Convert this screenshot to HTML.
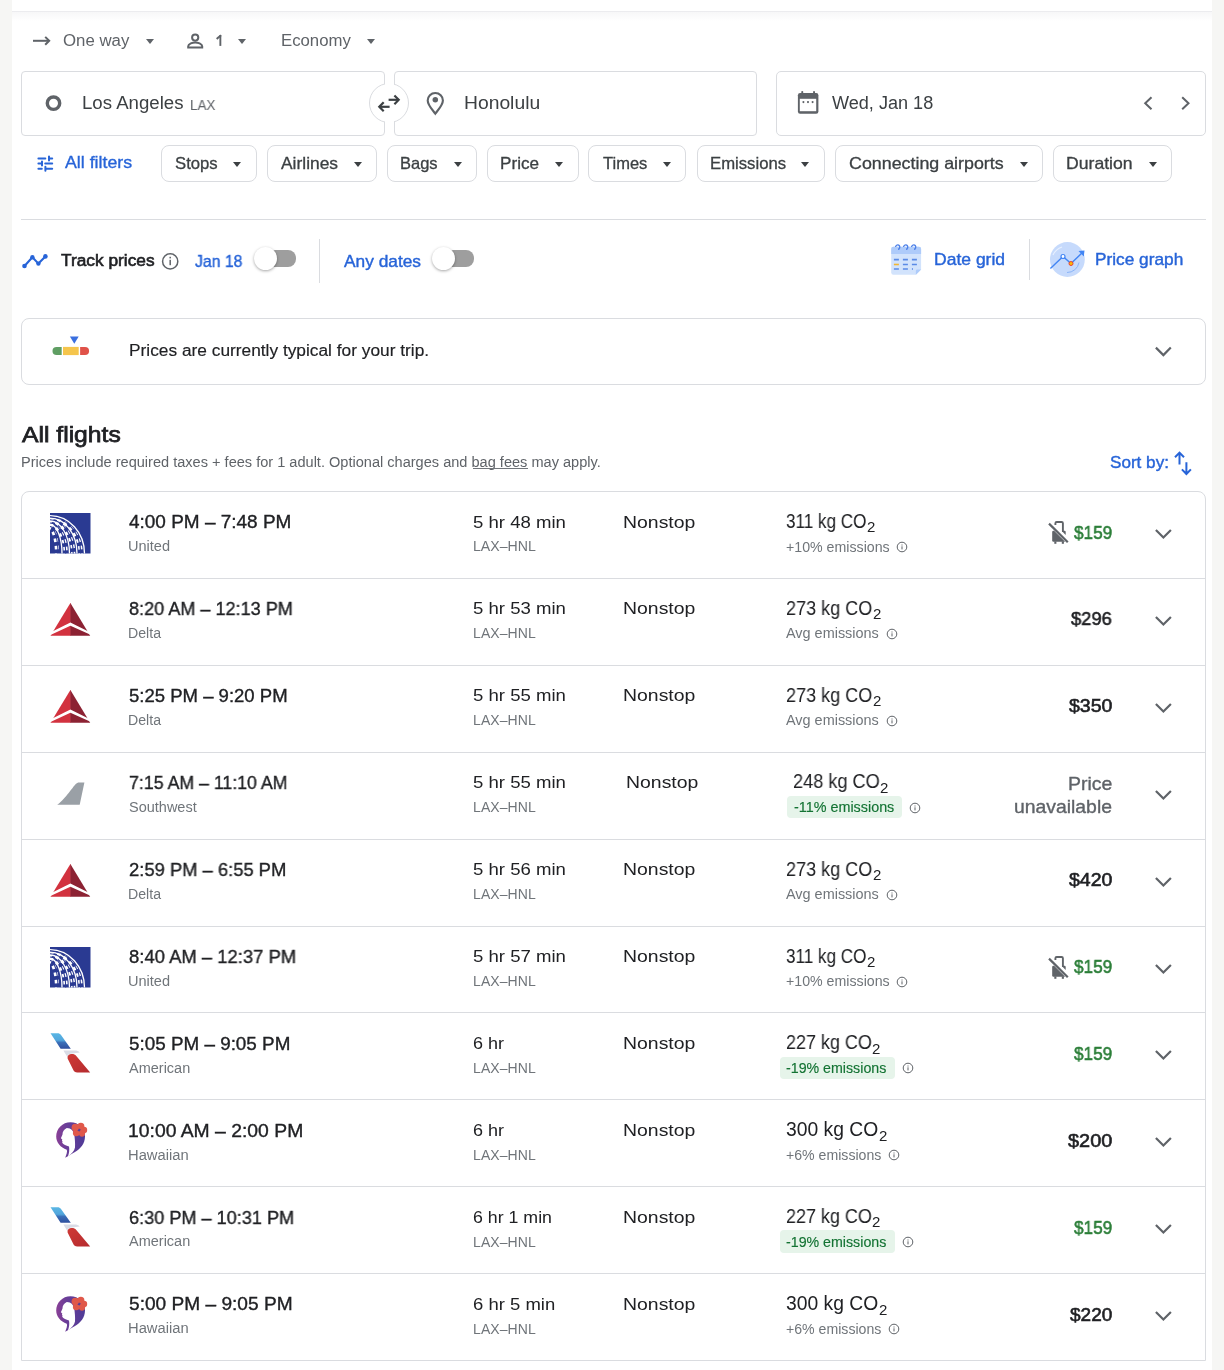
<!DOCTYPE html>
<html><head><meta charset="utf-8"><title>Flights</title>
<style>
html,body{margin:0;padding:0;}
body{width:1224px;height:1370px;overflow:hidden;background:#f6f6f4;font-family:"Liberation Sans",sans-serif;}
#pg{position:absolute;left:0;top:0;width:1224px;height:1370px;overflow:hidden;}
.white{position:absolute;left:12px;top:0;width:1200px;height:1370px;background:#fff;}
.t{position:absolute;white-space:nowrap;z-index:2;will-change:transform;}
.a{position:absolute;}
.box{position:absolute;box-sizing:border-box;border:1px solid #dadce0;background:#fff;}
.chip{position:absolute;box-sizing:border-box;border:1px solid #dadce0;border-radius:8px;height:37px;top:145px;background:#fff;}
.tri{position:absolute;width:0;height:0;border-left:4.5px solid transparent;border-right:4.5px solid transparent;border-top:5px solid #3c4043;}
.hr{position:absolute;height:1px;background:#dadce0;}
.vr{position:absolute;width:1px;background:#dadce0;}
svg{position:absolute;overflow:visible;}
.tog-track{position:absolute;height:16px;border-radius:8px;background:#9e9e9e;opacity:1;}
.tog-knob{position:absolute;width:23px;height:23px;border-radius:50%;background:#fff;box-shadow:0 1px 3px rgba(0,0,0,.35);}
.badge{position:absolute;background:#e6f4ea;border-radius:4px;height:23px;}
</style></head>
<body><div id="pg"><div class="white"></div>
<div class="a" style="left:12px;top:11px;width:1200px;height:1px;background:#ececef"></div>
<div class="a" style="left:12px;top:12px;width:1200px;height:9px;background:linear-gradient(#f7f7f8,#fff)"></div>
<svg style="left:0;top:0" width="1224" height="60"><g fill="none" stroke="#5f6368" stroke-width="2"><path d="M33 40.8H49"/><path d="M45.2 36.9L49.2 40.8L45.2 44.8"/></g><g fill="none" stroke="#5f6368" stroke-width="2"><circle cx="195.2" cy="37.6" r="3.1"/><path d="M188.2 47.5V46.2c0-2.4 4.6-3.8 7-3.8s7 1.4 7 3.8V47.5z"/></g></svg>
<div class="tri" style="left:146px;top:38.5px;border-top-color:#5f6368"></div>
<svg style="left:0;top:0" width="300" height="60"><path d="M217.4 38.3L220.3 35.9" stroke="#5f6368" stroke-width="1.9" stroke-linecap="square"/><path d="M220.35 35V45.9" stroke="#5f6368" stroke-width="1.9"/></svg>
<div class="tri" style="left:238px;top:38.5px;border-top-color:#5f6368"></div>
<div class="tri" style="left:367px;top:38.5px;border-top-color:#5f6368"></div>
<div class="box" style="left:21px;top:71px;width:363.5px;height:64.5px;border-radius:4px"></div>
<div class="box" style="left:394px;top:71px;width:363px;height:64.5px;border-radius:4px"></div>
<div class="box" style="left:776px;top:71px;width:430px;height:64.5px;border-radius:5px"></div>
<div class="a" style="left:368.6px;top:82.6px;width:40.8px;height:40.8px;box-sizing:border-box;border:1px solid #dadce0;border-radius:50%;background:#fff;z-index:1"></div>
<div class="a" style="left:384.5px;top:70px;width:9px;height:67px;background:#fff;z-index:1"></div>
<svg style="left:0;top:0;z-index:3" width="1224" height="140"><circle cx="53.5" cy="103.2" r="6.2" fill="none" stroke="#5f6368" stroke-width="3.4"/><g fill="none" stroke="#3c4043" stroke-width="2.2"><path d="M388.6 99.8H398.5"/><path d="M394.4 95.4L398.7 99.8L394.4 104.2"/><path d="M389.6 106.8H379.5"/><path d="M383.7 102.3L379.3 106.8L383.7 111.2"/></g><path d="M435.3 93c-4.3 0-7.6 3.3-7.6 7.4c0 4.6 5 9.7 7.6 13.3c2.6-3.6 7.6-8.7 7.6-13.3c0-4.1-3.3-7.4-7.6-7.4z" fill="none" stroke="#5f6368" stroke-width="2.1"/><circle cx="435.3" cy="99.8" r="2.75" fill="#5f6368"/><rect x="797.9" y="93.1" width="20.5" height="20.6" rx="2.2" fill="#5f6368"/><rect x="799.8" y="98.8" width="16.4" height="12.4" fill="#fff"/><rect x="801.3" y="90.9" width="1.9" height="3.5" rx="0.9" fill="#5f6368"/><rect x="813.1" y="90.9" width="1.9" height="3.5" rx="0.9" fill="#5f6368"/><circle cx="803.4" cy="102.1" r="1.05" fill="#5f6368"/><circle cx="808" cy="102.1" r="1.05" fill="#5f6368"/><circle cx="812.6" cy="102.1" r="1.05" fill="#5f6368"/><g fill="none" stroke="#5f6368" stroke-width="2"><path d="M1151.5 97.2L1145.2 103.2L1151.5 109.2"/><path d="M1182.2 97.2L1188.5 103.2L1182.2 109.2"/></g></svg>
<svg style="left:0;top:0" width="200" height="200"><g stroke="#2764d8" stroke-width="2" fill="none" stroke-linecap="round"><path d="M38.4 158.4H45.3M49 158.4H52.2M49 156.4V160.4"/><path d="M38.4 163.6H41.6M45.2 163.6H52.2M42 161.6V165.6"/><path d="M38.4 168.7H41.8M45.6 168.7H52.2M45.4 166.8V170.8"/></g></svg>
<div class="chip" style="left:161px;width:95.5px"></div>
<div class="tri" style="left:233.0px;top:161.5px;z-index:3"></div>
<div class="chip" style="left:266.7px;width:110.3px"></div>
<div class="tri" style="left:353.5px;top:161.5px;z-index:3"></div>
<div class="chip" style="left:387.3px;width:90.0px"></div>
<div class="tri" style="left:453.8px;top:161.5px;z-index:3"></div>
<div class="chip" style="left:487.2px;width:91.5px"></div>
<div class="tri" style="left:555.2px;top:161.5px;z-index:3"></div>
<div class="chip" style="left:588.4px;width:98.0px"></div>
<div class="tri" style="left:662.9px;top:161.5px;z-index:3"></div>
<div class="chip" style="left:696.5px;width:128.3px"></div>
<div class="tri" style="left:801.3px;top:161.5px;z-index:3"></div>
<div class="chip" style="left:835.4px;width:207.6px"></div>
<div class="tri" style="left:1019.5px;top:161.5px;z-index:3"></div>
<div class="chip" style="left:1053.2px;width:119.2px"></div>
<div class="tri" style="left:1148.9px;top:161.5px;z-index:3"></div>
<div class="hr" style="left:21px;top:219px;width:1185px"></div>
<svg style="left:0;top:0" width="1224" height="300"><g fill="#2764d8"><circle cx="24.5" cy="266" r="2.3"/><circle cx="32.4" cy="257.3" r="2.2"/><circle cx="38.4" cy="263.6" r="2.2"/><circle cx="45.4" cy="256.4" r="2.3"/></g><path d="M24.5 266L32.4 257.3L38.4 263.6L45.4 256.4" fill="none" stroke="#2764d8" stroke-width="2.1" stroke-linejoin="round"/><circle cx="170.2" cy="261.4" r="7.6" fill="none" stroke="#5f6368" stroke-width="1.5"/><rect x="169.45" y="259.8" width="1.5" height="5.4" fill="#5f6368"/><rect x="169.45" y="256.8" width="1.5" height="1.6" fill="#5f6368"/></svg>
<div class="tog-track" style="left:262px;top:250.1px;width:34px;height:16.6px"></div>
<div class="tog-knob" style="left:254.2px;top:247.2px"></div>
<div class="vr" style="left:319px;top:238.8px;height:44.5px"></div>
<div class="tog-track" style="left:440px;top:250.1px;width:34px;height:16.6px"></div>
<div class="tog-knob" style="left:432.3px;top:247.2px"></div>
<svg style="left:0;top:0" width="1224" height="300"><path d="M891.2 249a2.2 2.2 0 0 1 2.2-2.2H918.9a2.2 2.2 0 0 1 2.2 2.2V269.5L915.9 274.8H893.4a2.2 2.2 0 0 1-2.2-2.2z" fill="#d2e3fc"/><path d="M891.2 249a2.2 2.2 0 0 1 2.2-2.2H918.9a2.2 2.2 0 0 1 2.2 2.2V253.9H891.2z" fill="#aecbfa"/><g fill="none" stroke="#4a7ee8" stroke-width="1.3"><path d="M895.6 247a2.1 2.1 0 1 1 3.2 1.8V250"/><path d="M903.6 247a2.1 2.1 0 1 1 3.2 1.8V250"/><path d="M911.6 247a2.1 2.1 0 1 1 3.2 1.8V250"/></g><g stroke="#5a8ae6" stroke-width="1.6"><path d="M893.9 259.6H898.9M902.9 259.6H907.9M911.9 259.6H916.9M902.9 264.5H907.9M911.9 264.5H916.9M893.9 269H898.9M902.9 269H907.9M911.9 269H913"/></g><path d="M893.9 264.5H898.9" stroke="#f2b632" stroke-width="1.6"/><path d="M915.9 274.8V270.8a1.3 1.3 0 0 1 1.3-1.3H921.1z" fill="#aecbfa"/></svg>
<div class="vr" style="left:1029px;top:239px;height:41px"></div>
<svg style="left:0;top:0" width="1224" height="300"><circle cx="1067.4" cy="259.5" r="17.4" fill="#c6dafc"/><path d="M1053 255a15 15 0 0 1 9 -8" fill="none" stroke="#e8f0fe" stroke-width="1.2"/><path d="M1050.4 268.5L1063 256.5L1071 263.5L1083.5 251.5" fill="none" stroke="#4285f4" stroke-width="1.4"/><path d="M1078.5 251L1084.5 250.5L1083.8 256.5z" fill="#4285f4"/><circle cx="1063" cy="256.5" r="2" fill="#fff" stroke="#4285f4" stroke-width="1.2"/><circle cx="1071" cy="263.5" r="2" fill="#fbbc04" stroke="#ea4335" stroke-width="1"/><path d="M1067 272.5a12 12 0 0 0 12 -10" fill="none" stroke="#8ab4f8" stroke-width="1"/></svg>
<div class="box" style="left:21px;top:318px;width:1185px;height:67px;border-radius:8px"></div>
<svg style="left:0;top:0;z-index:3" width="1224" height="400"><path d="M56.6 346.9H61.7V355.1H56.6a4.1 4.1 0 0 1 0-8.2z" fill="#5f9e63"/><rect x="63" y="346.9" width="15.7" height="8.2" fill="#f5c54c"/><path d="M80.1 346.9H85a4.1 4.1 0 0 1 0 8.2H80.1z" fill="#e05249"/><path d="M69.9 336.5H78.7L74.3 343.7z" fill="#3a6fdf"/><path d="M1155.9 347.6L1163.4 355.1L1170.8 347.6" fill="none" stroke="#5f6368" stroke-width="2.2"/></svg>
<div class="a" style="left:472.6px;top:468px;width:55.6px;height:1px;background:#70757a;z-index:3"></div>
<svg style="left:0;top:0" width="1224" height="500"><g fill="none" stroke="#2764d8" stroke-width="2"><path d="M1179.5 453V464.6M1175 457.2L1179.5 452.6L1184 457.2"/><path d="M1186.4 462.2V473.8M1181.9 469.4L1186.4 474L1190.9 469.4"/></g></svg>
<div class="box" style="left:21px;top:491px;width:1185px;height:870px;border-radius:8px 8px 0 0;border-color:#dadce0"></div>
<svg style="left:50px;top:512.5px" width="40.5" height="40.5" viewBox="0 0 40.5 40.5"><rect width="40.5" height="40.5" fill="#2a3a92"/><g fill="none" stroke="#fff" stroke-width="1.3"><path d="M0 2.6A34.5 37.9 0 0 1 34.5 40.5"/><path d="M0 5A27 35.5 0 0 1 27 40.5"/><path d="M0 8A19.5 32.5 0 0 1 19.5 40.5"/><path d="M0 11.5A12 29 0 0 1 12 40.5"/></g><g fill="none" stroke="#fff" stroke-width="4.2" stroke-dasharray="3.6 3.6"><path d="M0 6.3A30.7 34.2 0 0 1 30.7 40.5" stroke-dashoffset="0"/><path d="M0 9A23.2 31.5 0 0 1 23.2 40.5" stroke-dashoffset="1.8"/><path d="M0 12.3A15.7 28.2 0 0 1 15.7 40.5" stroke-dashoffset="0.5"/><path d="M0 15.5A7 25 0 0 1 7 40.5" stroke-dashoffset="2.4"/></g><g fill="none" stroke="#2a3a92" stroke-width="1.1"><path d="M0 4A30.7 36.5 0 0 1 30.7 40.5"/><path d="M0 6.8A23.2 33.7 0 0 1 23.2 40.5"/><path d="M0 10A15.7 30.5 0 0 1 15.7 40.5"/><path d="M0 13.5A8 27 0 0 1 8 40.5"/></g></svg>
<svg style="left:1044px;top:517.0px" width="28" height="30" viewBox="0 0 28 30"><path d="M8.2 14.9a1.2 1.2 0 0 1 1.2 -1.2H10.1L21.2 24.7H9.4a1.2 1.2 0 0 1 -1.2 -1.2z" fill="#5f6368"/><path d="M18 13.7H20.5a1.2 1.2 0 0 1 1.2 1.2V17.9L18 14.3z" fill="#5f6368"/><rect x="10.3" y="24.4" width="2.1" height="2.4" fill="#5f6368"/><rect x="17.8" y="24.4" width="2.1" height="2.4" fill="#5f6368"/><path d="M11.4 8V6.3a1.3 1.3 0 0 1 1.3 -1.3H17.6a1.3 1.3 0 0 1 1.3 1.3V14.4" fill="none" stroke="#5f6368" stroke-width="1.9"/><path d="M5 6.6L23.8 25.2" stroke="#5f6368" stroke-width="2.2"/></svg>
<svg style="left:0;top:491.0px" width="1224" height="87"><path d="M1155.9 39L1163.4 46.5L1170.9 39" fill="none" stroke="#5f6368" stroke-width="2.2"/></svg>
<div class="hr" style="left:22px;top:578px;width:1183.5px"></div>
<svg style="left:0;top:577.9px" width="100" height="87" viewBox="0 578 100 87"><path d="M70.4 603L50.5 635.8H70.9V603.8z" fill="#d2323f"/><path d="M70.4 603L90.2 635.8H70.4z" fill="#8c2233"/><path d="M50.8 632.2L70.4 622.4L90 632.2V634.6L70.4 625.8L51 634.8z" fill="#fff"/></svg>
<svg style="left:0;top:577.9px" width="1224" height="87"><path d="M1155.9 39L1163.4 46.5L1170.9 39" fill="none" stroke="#5f6368" stroke-width="2.2"/></svg>
<div class="hr" style="left:22px;top:665px;width:1183.5px"></div>
<svg style="left:0;top:664.8px" width="100" height="87" viewBox="0 578 100 87"><path d="M70.4 603L50.5 635.8H70.9V603.8z" fill="#d2323f"/><path d="M70.4 603L90.2 635.8H70.4z" fill="#8c2233"/><path d="M50.8 632.2L70.4 622.4L90 632.2V634.6L70.4 625.8L51 634.8z" fill="#fff"/></svg>
<svg style="left:0;top:664.8px" width="1224" height="87"><path d="M1155.9 39L1163.4 46.5L1170.9 39" fill="none" stroke="#5f6368" stroke-width="2.2"/></svg>
<div class="hr" style="left:22px;top:752px;width:1183.5px"></div>
<svg style="left:0;top:751.7px" width="100" height="87" viewBox="0 752 100 87"><path d="M57.2 804.7C63 801.5 73 787 75.5 784.3C76.8 782.9 77.8 782.4 79 782.4H84.4L79.7 804.7z" fill="#9aa0a6"/></svg>
<div class="badge" style="left:787.4000000000001px;top:795.9000000000001px;width:114.6px;height:22.6px"></div>
<svg style="left:908.9000000000001px;top:801.7px" width="12" height="12" viewBox="0 0 12 12"><circle cx="6" cy="6" r="4.8" fill="none" stroke="#5f6368" stroke-width="1"/><rect x="5.5" y="5.3" width="1" height="3.1" fill="#5f6368"/><rect x="5.5" y="3.5" width="1" height="1" fill="#5f6368"/></svg>
<svg style="left:0;top:751.7px" width="1224" height="87"><path d="M1155.9 39L1163.4 46.5L1170.9 39" fill="none" stroke="#5f6368" stroke-width="2.2"/></svg>
<div class="hr" style="left:22px;top:839px;width:1183.5px"></div>
<svg style="left:0;top:838.6px" width="100" height="87" viewBox="0 578 100 87"><path d="M70.4 603L50.5 635.8H70.9V603.8z" fill="#d2323f"/><path d="M70.4 603L90.2 635.8H70.4z" fill="#8c2233"/><path d="M50.8 632.2L70.4 622.4L90 632.2V634.6L70.4 625.8L51 634.8z" fill="#fff"/></svg>
<svg style="left:0;top:838.6px" width="1224" height="87"><path d="M1155.9 39L1163.4 46.5L1170.9 39" fill="none" stroke="#5f6368" stroke-width="2.2"/></svg>
<div class="hr" style="left:22px;top:926px;width:1183.5px"></div>
<svg style="left:50px;top:947.0px" width="40.5" height="40.5" viewBox="0 0 40.5 40.5"><rect width="40.5" height="40.5" fill="#2a3a92"/><g fill="none" stroke="#fff" stroke-width="1.3"><path d="M0 2.6A34.5 37.9 0 0 1 34.5 40.5"/><path d="M0 5A27 35.5 0 0 1 27 40.5"/><path d="M0 8A19.5 32.5 0 0 1 19.5 40.5"/><path d="M0 11.5A12 29 0 0 1 12 40.5"/></g><g fill="none" stroke="#fff" stroke-width="4.2" stroke-dasharray="3.6 3.6"><path d="M0 6.3A30.7 34.2 0 0 1 30.7 40.5" stroke-dashoffset="0"/><path d="M0 9A23.2 31.5 0 0 1 23.2 40.5" stroke-dashoffset="1.8"/><path d="M0 12.3A15.7 28.2 0 0 1 15.7 40.5" stroke-dashoffset="0.5"/><path d="M0 15.5A7 25 0 0 1 7 40.5" stroke-dashoffset="2.4"/></g><g fill="none" stroke="#2a3a92" stroke-width="1.1"><path d="M0 4A30.7 36.5 0 0 1 30.7 40.5"/><path d="M0 6.8A23.2 33.7 0 0 1 23.2 40.5"/><path d="M0 10A15.7 30.5 0 0 1 15.7 40.5"/><path d="M0 13.5A8 27 0 0 1 8 40.5"/></g></svg>
<svg style="left:1044px;top:951.5px" width="28" height="30" viewBox="0 0 28 30"><path d="M8.2 14.9a1.2 1.2 0 0 1 1.2 -1.2H10.1L21.2 24.7H9.4a1.2 1.2 0 0 1 -1.2 -1.2z" fill="#5f6368"/><path d="M18 13.7H20.5a1.2 1.2 0 0 1 1.2 1.2V17.9L18 14.3z" fill="#5f6368"/><rect x="10.3" y="24.4" width="2.1" height="2.4" fill="#5f6368"/><rect x="17.8" y="24.4" width="2.1" height="2.4" fill="#5f6368"/><path d="M11.4 8V6.3a1.3 1.3 0 0 1 1.3 -1.3H17.6a1.3 1.3 0 0 1 1.3 1.3V14.4" fill="none" stroke="#5f6368" stroke-width="1.9"/><path d="M5 6.6L23.8 25.2" stroke="#5f6368" stroke-width="2.2"/></svg>
<svg style="left:0;top:925.5px" width="1224" height="87"><path d="M1155.9 39L1163.4 46.5L1170.9 39" fill="none" stroke="#5f6368" stroke-width="2.2"/></svg>
<div class="hr" style="left:22px;top:1012px;width:1183.5px"></div>
<svg style="left:0;top:1012.4px" width="100" height="87" viewBox="0 1013 100 87"><defs><linearGradient id="aab1012.4" x1="0" y1="0" x2="0" y2="1"><stop offset="0" stop-color="#5ab6e4"/><stop offset="0.45" stop-color="#52a6dc"/><stop offset="0.6" stop-color="#3a6fb8"/><stop offset="1" stop-color="#2f4f9e"/></linearGradient><linearGradient id="aar1012.4" x1="0" y1="0" x2="1" y2="1"><stop offset="0" stop-color="#cf3a36"/><stop offset="1" stop-color="#b52b2e"/></linearGradient></defs><path d="M50.5 1034.3H57.6C59 1034.3 60.2 1035 61 1035.9L70.8 1049.7H60.6L51.2 1035.2z" fill="url(#aab1012.4)"/><path d="M63.4 1051.6H74.6C76.8 1051.6 78.5 1052.2 79.7 1053.4L70.2 1054.8C68.5 1055.2 67.6 1056.3 67.5 1058.2z" fill="#d9dce6"/><path d="M71 1055C68.4 1055.3 67.2 1057 67.6 1059.4L73.2 1070.8C74 1072.6 75.2 1073.5 77.3 1073.5H90.2L76.3 1056.9C75 1055.4 73.3 1054.8 71 1055z" fill="url(#aar1012.4)"/></svg>
<div class="badge" style="left:780.2px;top:1056.6px;width:114.6px;height:22.6px"></div>
<svg style="left:901.7px;top:1062.4px" width="12" height="12" viewBox="0 0 12 12"><circle cx="6" cy="6" r="4.8" fill="none" stroke="#5f6368" stroke-width="1"/><rect x="5.5" y="5.3" width="1" height="3.1" fill="#5f6368"/><rect x="5.5" y="3.5" width="1" height="1" fill="#5f6368"/></svg>
<svg style="left:0;top:1012.4px" width="1224" height="87"><path d="M1155.9 39L1163.4 46.5L1170.9 39" fill="none" stroke="#5f6368" stroke-width="2.2"/></svg>
<div class="hr" style="left:22px;top:1099px;width:1183.5px"></div>
<svg style="left:0;top:1099.3px" width="100" height="87" viewBox="0 1100 100 87"><defs><linearGradient id="hag1099.3" x1="0" y1="0" x2="1" y2="0"><stop offset="0" stop-color="#8a4096"/><stop offset="0.35" stop-color="#6a3e98"/><stop offset="1" stop-color="#4f3b97"/></linearGradient></defs><path d="M65.2 1158.8C66.5 1155.5 67.5 1152.5 66.8 1150.8C60.5 1148.5 56.2 1143.5 56.2 1137.5C56.2 1129.5 62.5 1123.2 70.5 1123.2C78.5 1123.2 85 1129.5 85 1137.5C85 1144.5 80.5 1150 75 1153C71.5 1155 68 1157 65.2 1158.8z" fill="url(#hag1099.3)"/><path d="M66.8 1129C64 1130.2 62.4 1132.8 62.5 1135.6L60.9 1139.2L62.3 1140.4L61.9 1141.6L62.5 1142.5L62.2 1143.8C63.3 1145.6 66.2 1146.6 69 1147.5C69.6 1150.7 69.2 1154.3 67.9 1157.4C71.6 1154.8 74.4 1151.6 75 1148.4C75.3 1143.8 74.8 1139.8 74.4 1136.4C73.8 1132 71.2 1129.2 66.8 1129z" fill="#fff"/><g fill="#e0584a"><circle cx="75.2" cy="1128.4" r="3.6"/><circle cx="80.8" cy="1127.4" r="3.6"/><circle cx="84" cy="1131" r="3.2"/><circle cx="82" cy="1134.6" r="3.1"/><circle cx="76.2" cy="1134" r="3.3"/><circle cx="79.2" cy="1131" r="3.8"/></g><path d="M77.4 1131.8L79 1129.6L80.8 1130.4L79.6 1132.4z" fill="#5a3d96"/></svg>
<svg style="left:0;top:1099.3px" width="1224" height="87"><path d="M1155.9 39L1163.4 46.5L1170.9 39" fill="none" stroke="#5f6368" stroke-width="2.2"/></svg>
<div class="hr" style="left:22px;top:1186px;width:1183.5px"></div>
<svg style="left:0;top:1186.2px" width="100" height="87" viewBox="0 1013 100 87"><defs><linearGradient id="aab1186.2" x1="0" y1="0" x2="0" y2="1"><stop offset="0" stop-color="#5ab6e4"/><stop offset="0.45" stop-color="#52a6dc"/><stop offset="0.6" stop-color="#3a6fb8"/><stop offset="1" stop-color="#2f4f9e"/></linearGradient><linearGradient id="aar1186.2" x1="0" y1="0" x2="1" y2="1"><stop offset="0" stop-color="#cf3a36"/><stop offset="1" stop-color="#b52b2e"/></linearGradient></defs><path d="M50.5 1034.3H57.6C59 1034.3 60.2 1035 61 1035.9L70.8 1049.7H60.6L51.2 1035.2z" fill="url(#aab1186.2)"/><path d="M63.4 1051.6H74.6C76.8 1051.6 78.5 1052.2 79.7 1053.4L70.2 1054.8C68.5 1055.2 67.6 1056.3 67.5 1058.2z" fill="#d9dce6"/><path d="M71 1055C68.4 1055.3 67.2 1057 67.6 1059.4L73.2 1070.8C74 1072.6 75.2 1073.5 77.3 1073.5H90.2L76.3 1056.9C75 1055.4 73.3 1054.8 71 1055z" fill="url(#aar1186.2)"/></svg>
<div class="badge" style="left:780.2px;top:1230.4px;width:114.6px;height:22.6px"></div>
<svg style="left:901.7px;top:1236.2px" width="12" height="12" viewBox="0 0 12 12"><circle cx="6" cy="6" r="4.8" fill="none" stroke="#5f6368" stroke-width="1"/><rect x="5.5" y="5.3" width="1" height="3.1" fill="#5f6368"/><rect x="5.5" y="3.5" width="1" height="1" fill="#5f6368"/></svg>
<svg style="left:0;top:1186.2px" width="1224" height="87"><path d="M1155.9 39L1163.4 46.5L1170.9 39" fill="none" stroke="#5f6368" stroke-width="2.2"/></svg>
<div class="hr" style="left:22px;top:1273px;width:1183.5px"></div>
<svg style="left:0;top:1273.1px" width="100" height="87" viewBox="0 1100 100 87"><defs><linearGradient id="hag1273.1" x1="0" y1="0" x2="1" y2="0"><stop offset="0" stop-color="#8a4096"/><stop offset="0.35" stop-color="#6a3e98"/><stop offset="1" stop-color="#4f3b97"/></linearGradient></defs><path d="M65.2 1158.8C66.5 1155.5 67.5 1152.5 66.8 1150.8C60.5 1148.5 56.2 1143.5 56.2 1137.5C56.2 1129.5 62.5 1123.2 70.5 1123.2C78.5 1123.2 85 1129.5 85 1137.5C85 1144.5 80.5 1150 75 1153C71.5 1155 68 1157 65.2 1158.8z" fill="url(#hag1273.1)"/><path d="M66.8 1129C64 1130.2 62.4 1132.8 62.5 1135.6L60.9 1139.2L62.3 1140.4L61.9 1141.6L62.5 1142.5L62.2 1143.8C63.3 1145.6 66.2 1146.6 69 1147.5C69.6 1150.7 69.2 1154.3 67.9 1157.4C71.6 1154.8 74.4 1151.6 75 1148.4C75.3 1143.8 74.8 1139.8 74.4 1136.4C73.8 1132 71.2 1129.2 66.8 1129z" fill="#fff"/><g fill="#e0584a"><circle cx="75.2" cy="1128.4" r="3.6"/><circle cx="80.8" cy="1127.4" r="3.6"/><circle cx="84" cy="1131" r="3.2"/><circle cx="82" cy="1134.6" r="3.1"/><circle cx="76.2" cy="1134" r="3.3"/><circle cx="79.2" cy="1131" r="3.8"/></g><path d="M77.4 1131.8L79 1129.6L80.8 1130.4L79.6 1132.4z" fill="#5a3d96"/></svg>
<svg style="left:0;top:1273.1px" width="1224" height="87"><path d="M1155.9 39L1163.4 46.5L1170.9 39" fill="none" stroke="#5f6368" stroke-width="2.2"/></svg>
<div class="t" style="left:63.20px;top:32.65px;font-size:16px;line-height:16px;color:#5f6368;transform:scaleX(1.0500);transform-origin:0 0">One way</div>
<div class="t" style="left:280.65px;top:32.65px;font-size:16px;line-height:16px;color:#5f6368;transform:scaleX(1.0473);transform-origin:0 0">Economy</div>
<div class="t" style="left:82.27px;top:94.36px;font-size:18px;line-height:18px;color:#3c4043;transform:scaleX(1.0350);transform-origin:0 0">Los Angeles</div>
<div class="t" style="left:190.14px;top:97.75px;font-size:14px;line-height:14px;color:#5f6368;transform:scaleX(0.9646);transform-origin:0 0">LAX</div>
<div class="t" style="left:464.33px;top:94.16px;font-size:18px;line-height:18px;color:#3c4043;transform:scaleX(1.0718);transform-origin:0 0">Honolulu</div>
<div class="t" style="left:832.00px;top:94.16px;font-size:18px;line-height:18px;color:#3c4043;transform:scaleX(1.0048);transform-origin:0 0">Wed, Jan 18</div>
<div class="t" style="left:65.40px;top:154.31px;font-size:17px;line-height:17px;color:#2764d8;transform:scaleX(1.0450);transform-origin:0 0;-webkit-text-stroke:0.35px #2764d8">All filters</div>
<div class="t" style="left:174.90px;top:154.73px;font-size:16.5px;line-height:16.5px;color:#3c4043;transform:scaleX(1.0109);transform-origin:0 0;-webkit-text-stroke:0.3px #3c4043">Stops</div>
<div class="t" style="left:281.00px;top:154.73px;font-size:16.5px;line-height:16.5px;color:#3c4043;transform:scaleX(1.0548);transform-origin:0 0;-webkit-text-stroke:0.3px #3c4043">Airlines</div>
<div class="t" style="left:400.40px;top:154.73px;font-size:16.5px;line-height:16.5px;color:#3c4043;-webkit-text-stroke:0.3px #3c4043">Bags</div>
<div class="t" style="left:500.16px;top:154.73px;font-size:16.5px;line-height:16.5px;color:#3c4043;transform:scaleX(1.0380);transform-origin:0 0;-webkit-text-stroke:0.3px #3c4043">Price</div>
<div class="t" style="left:602.50px;top:154.73px;font-size:16.5px;line-height:16.5px;color:#3c4043;-webkit-text-stroke:0.3px #3c4043">Times</div>
<div class="t" style="left:710.19px;top:154.73px;font-size:16.5px;line-height:16.5px;color:#3c4043;transform:scaleX(1.0117);transform-origin:0 0;-webkit-text-stroke:0.3px #3c4043">Emissions</div>
<div class="t" style="left:849.30px;top:154.73px;font-size:16.5px;line-height:16.5px;color:#3c4043;transform:scaleX(1.0810);transform-origin:0 0;-webkit-text-stroke:0.3px #3c4043">Connecting airports</div>
<div class="t" style="left:1065.93px;top:154.73px;font-size:16.5px;line-height:16.5px;color:#3c4043;transform:scaleX(1.0688);transform-origin:0 0;-webkit-text-stroke:0.3px #3c4043">Duration</div>
<div class="t" style="left:61.00px;top:252.58px;font-size:16.8px;line-height:16.8px;color:#202124;transform:scaleX(1.0314);transform-origin:0 0;-webkit-text-stroke:0.6px #202124">Track prices</div>
<div class="t" style="left:195.00px;top:252.51px;font-size:17px;line-height:17px;color:#2764d8;transform:scaleX(0.9291);transform-origin:0 0;-webkit-text-stroke:0.4px #2764d8">Jan 18</div>
<div class="t" style="left:344.00px;top:252.51px;font-size:17px;line-height:17px;color:#2764d8;transform:scaleX(1.0186);transform-origin:0 0;-webkit-text-stroke:0.4px #2764d8">Any dates</div>
<div class="t" style="left:933.87px;top:250.61px;font-size:17px;line-height:17px;color:#2764d8;transform:scaleX(1.0307);transform-origin:0 0;-webkit-text-stroke:0.4px #2764d8">Date grid</div>
<div class="t" style="left:1094.68px;top:250.51px;font-size:17px;line-height:17px;color:#2764d8;transform:scaleX(1.0154);transform-origin:0 0;-webkit-text-stroke:0.4px #2764d8">Price graph</div>
<div class="t" style="left:128.60px;top:342.82px;font-size:15.8px;line-height:15.8px;color:#202124;transform:scaleX(1.0957);transform-origin:0 0;-webkit-text-stroke:0.15px #202124">Prices are currently typical for your trip.</div>
<div class="t" style="left:21.90px;top:424.15px;font-size:22.5px;line-height:22.5px;color:#202124;transform:scaleX(1.0971);transform-origin:0 0;-webkit-text-stroke:0.75px #202124">All flights</div>
<div class="t" style="left:20.86px;top:455.15px;font-size:14px;line-height:14px;color:#5f6368;transform:scaleX(1.0402);transform-origin:0 0">Prices include required taxes + fees for 1 adult. Optional charges and bag fees may apply.</div>
<div class="t" style="left:1109.60px;top:454.31px;font-size:17px;line-height:17px;color:#2764d8;transform:scaleX(1.0060);transform-origin:0 0;-webkit-text-stroke:0.4px #2764d8">Sort by:</div>
<div class="t" style="left:129.00px;top:513.34px;font-size:18.5px;line-height:18.5px;color:#202124;transform:scaleX(1.0252);transform-origin:0 0;-webkit-text-stroke:0.35px #202124">4:00 PM – 7:48 PM</div>
<div class="t" style="left:127.96px;top:539.25px;font-size:14px;line-height:14px;color:#70757a;transform:scaleX(1.0392);transform-origin:0 0">United</div>
<div class="t" style="left:473.20px;top:513.51px;font-size:17px;line-height:17px;color:#202124;transform:scaleX(1.0924);transform-origin:0 0">5 hr 48 min</div>
<div class="t" style="left:472.79px;top:539.45px;font-size:14px;line-height:14px;color:#70757a;transform:scaleX(1.0086);transform-origin:0 0">LAX–HNL</div>
<div class="t" style="left:622.86px;top:513.51px;font-size:17px;line-height:17px;color:#202124;transform:scaleX(1.1428);transform-origin:0 0">Nonstop</div>
<div class="t" style="left:866.80px;top:519.40px;font-size:15px;line-height:15px;color:#202124">2</div>
<div class="t" style="left:786.10px;top:512.06px;font-size:19.3px;line-height:19.3px;color:#202124;transform:scaleX(0.8860);transform-origin:0 0">311 kg CO</div>
<svg style="left:896.45px;top:541.0px" width="12" height="12" viewBox="0 0 12 12"><circle cx="6" cy="6" r="4.8" fill="none" stroke="#5f6368" stroke-width="1"/><rect x="5.5" y="5.3" width="1" height="3.1" fill="#5f6368"/><rect x="5.5" y="3.5" width="1" height="1" fill="#5f6368"/></svg>
<div class="t" style="left:786.10px;top:539.55px;font-size:14px;line-height:14px;color:#70757a;transform:scaleX(1.0134);transform-origin:0 0">+10% emissions</div>
<div class="t" style="left:1074.00px;top:522.51px;font-size:19px;line-height:19px;color:#2b7e38;transform:scaleX(0.9017);transform-origin:0 0;-webkit-text-stroke:0.6px #2b7e38">$159</div>
<div class="t" style="left:129.00px;top:600.24px;font-size:18.5px;line-height:18.5px;color:#202124;transform:scaleX(0.9770);transform-origin:0 0;-webkit-text-stroke:0.35px #202124">8:20 AM – 12:13 PM</div>
<div class="t" style="left:127.99px;top:626.15px;font-size:14px;line-height:14px;color:#70757a;transform:scaleX(1.0095);transform-origin:0 0">Delta</div>
<div class="t" style="left:473.20px;top:600.41px;font-size:17px;line-height:17px;color:#202124;transform:scaleX(1.0924);transform-origin:0 0">5 hr 53 min</div>
<div class="t" style="left:472.80px;top:626.35px;font-size:14px;line-height:14px;color:#70757a;letter-spacing:0.089px">LAX–HNL</div>
<div class="t" style="left:622.86px;top:600.41px;font-size:17px;line-height:17px;color:#202124;transform:scaleX(1.1428);transform-origin:0 0">Nonstop</div>
<div class="t" style="left:872.60px;top:606.30px;font-size:15px;line-height:15px;color:#202124">2</div>
<div class="t" style="left:786.10px;top:598.96px;font-size:19.3px;line-height:19.3px;color:#202124;transform:scaleX(0.9352);transform-origin:0 0">273 kg CO</div>
<svg style="left:885.55px;top:627.9px" width="12" height="12" viewBox="0 0 12 12"><circle cx="6" cy="6" r="4.8" fill="none" stroke="#5f6368" stroke-width="1"/><rect x="5.5" y="5.3" width="1" height="3.1" fill="#5f6368"/><rect x="5.5" y="3.5" width="1" height="1" fill="#5f6368"/></svg>
<div class="t" style="left:786.10px;top:626.45px;font-size:14px;line-height:14px;color:#70757a;transform:scaleX(1.0311);transform-origin:0 0">Avg emissions</div>
<div class="t" style="left:1071.40px;top:609.41px;font-size:19px;line-height:19px;color:#202124;transform:scaleX(0.9640);transform-origin:0 0;-webkit-text-stroke:0.6px #202124">$296</div>
<div class="t" style="left:129.00px;top:687.14px;font-size:18.5px;line-height:18.5px;color:#202124;transform:scaleX(1.0016);transform-origin:0 0;-webkit-text-stroke:0.35px #202124">5:25 PM – 9:20 PM</div>
<div class="t" style="left:127.99px;top:713.05px;font-size:14px;line-height:14px;color:#70757a;transform:scaleX(1.0095);transform-origin:0 0">Delta</div>
<div class="t" style="left:473.20px;top:687.31px;font-size:17px;line-height:17px;color:#202124;transform:scaleX(1.0924);transform-origin:0 0">5 hr 55 min</div>
<div class="t" style="left:472.80px;top:713.25px;font-size:14px;line-height:14px;color:#70757a;letter-spacing:0.089px">LAX–HNL</div>
<div class="t" style="left:622.86px;top:687.31px;font-size:17px;line-height:17px;color:#202124;transform:scaleX(1.1428);transform-origin:0 0">Nonstop</div>
<div class="t" style="left:872.60px;top:693.20px;font-size:15px;line-height:15px;color:#202124">2</div>
<div class="t" style="left:786.10px;top:685.86px;font-size:19.3px;line-height:19.3px;color:#202124;transform:scaleX(0.9352);transform-origin:0 0">273 kg CO</div>
<svg style="left:885.55px;top:714.8px" width="12" height="12" viewBox="0 0 12 12"><circle cx="6" cy="6" r="4.8" fill="none" stroke="#5f6368" stroke-width="1"/><rect x="5.5" y="5.3" width="1" height="3.1" fill="#5f6368"/><rect x="5.5" y="3.5" width="1" height="1" fill="#5f6368"/></svg>
<div class="t" style="left:786.10px;top:713.35px;font-size:14px;line-height:14px;color:#70757a;transform:scaleX(1.0311);transform-origin:0 0">Avg emissions</div>
<div class="t" style="left:1068.70px;top:696.31px;font-size:19px;line-height:19px;color:#202124;transform:scaleX(1.0288);transform-origin:0 0;-webkit-text-stroke:0.6px #202124">$350</div>
<div class="t" style="left:129.00px;top:774.04px;font-size:18.5px;line-height:18.5px;color:#202124;transform:scaleX(0.9592);transform-origin:0 0;-webkit-text-stroke:0.35px #202124">7:15 AM – 11:10 AM</div>
<div class="t" style="left:129.00px;top:799.95px;font-size:14px;line-height:14px;color:#70757a;transform:scaleX(1.0354);transform-origin:0 0">Southwest</div>
<div class="t" style="left:473.20px;top:774.21px;font-size:17px;line-height:17px;color:#202124;transform:scaleX(1.0924);transform-origin:0 0">5 hr 55 min</div>
<div class="t" style="left:472.80px;top:800.15px;font-size:14px;line-height:14px;color:#70757a;letter-spacing:0.089px">LAX–HNL</div>
<div class="t" style="left:626.26px;top:774.21px;font-size:17px;line-height:17px;color:#202124;transform:scaleX(1.1428);transform-origin:0 0">Nonstop</div>
<div class="t" style="left:880.30px;top:779.80px;font-size:15px;line-height:15px;color:#202124">2</div>
<div class="t" style="left:793.30px;top:772.46px;font-size:19.3px;line-height:19.3px;color:#202124;transform:scaleX(0.9406);transform-origin:0 0">248 kg CO</div>
<div class="t" style="left:793.50px;top:800.05px;font-size:14px;line-height:14px;color:#137333;transform:scaleX(1.0258);transform-origin:0 0;-webkit-text-stroke:0.15px #137333;z-index:3">-11% emissions</div>
<div class="t" style="left:1067.95px;top:774.94px;font-size:18.5px;line-height:18.5px;color:#5f6368;transform:scaleX(1.0524);transform-origin:0 0;-webkit-text-stroke:0.35px #5f6368">Price</div>
<div class="t" style="left:1014.35px;top:797.74px;font-size:18.5px;line-height:18.5px;color:#5f6368;transform:scaleX(1.0464);transform-origin:0 0;-webkit-text-stroke:0.35px #5f6368">unavailable</div>
<div class="t" style="left:129.00px;top:860.94px;font-size:18.5px;line-height:18.5px;color:#202124;transform:scaleX(0.9933);transform-origin:0 0;-webkit-text-stroke:0.35px #202124">2:59 PM – 6:55 PM</div>
<div class="t" style="left:127.99px;top:886.85px;font-size:14px;line-height:14px;color:#70757a;transform:scaleX(1.0095);transform-origin:0 0">Delta</div>
<div class="t" style="left:473.20px;top:861.11px;font-size:17px;line-height:17px;color:#202124;transform:scaleX(1.0924);transform-origin:0 0">5 hr 56 min</div>
<div class="t" style="left:472.80px;top:887.05px;font-size:14px;line-height:14px;color:#70757a;letter-spacing:0.089px">LAX–HNL</div>
<div class="t" style="left:622.86px;top:861.11px;font-size:17px;line-height:17px;color:#202124;transform:scaleX(1.1428);transform-origin:0 0">Nonstop</div>
<div class="t" style="left:872.60px;top:867.00px;font-size:15px;line-height:15px;color:#202124">2</div>
<div class="t" style="left:786.10px;top:859.66px;font-size:19.3px;line-height:19.3px;color:#202124;transform:scaleX(0.9352);transform-origin:0 0">273 kg CO</div>
<svg style="left:885.55px;top:888.6px" width="12" height="12" viewBox="0 0 12 12"><circle cx="6" cy="6" r="4.8" fill="none" stroke="#5f6368" stroke-width="1"/><rect x="5.5" y="5.3" width="1" height="3.1" fill="#5f6368"/><rect x="5.5" y="3.5" width="1" height="1" fill="#5f6368"/></svg>
<div class="t" style="left:786.10px;top:887.15px;font-size:14px;line-height:14px;color:#70757a;transform:scaleX(1.0311);transform-origin:0 0">Avg emissions</div>
<div class="t" style="left:1068.70px;top:870.11px;font-size:19px;line-height:19px;color:#202124;transform:scaleX(1.0288);transform-origin:0 0;-webkit-text-stroke:0.6px #202124">$420</div>
<div class="t" style="left:129.00px;top:947.84px;font-size:18.5px;line-height:18.5px;color:#202124;transform:scaleX(0.9968);transform-origin:0 0;-webkit-text-stroke:0.35px #202124">8:40 AM – 12:37 PM</div>
<div class="t" style="left:127.96px;top:973.75px;font-size:14px;line-height:14px;color:#70757a;transform:scaleX(1.0392);transform-origin:0 0">United</div>
<div class="t" style="left:473.20px;top:948.01px;font-size:17px;line-height:17px;color:#202124;transform:scaleX(1.0924);transform-origin:0 0">5 hr 57 min</div>
<div class="t" style="left:472.80px;top:973.95px;font-size:14px;line-height:14px;color:#70757a;letter-spacing:0.089px">LAX–HNL</div>
<div class="t" style="left:622.86px;top:948.01px;font-size:17px;line-height:17px;color:#202124;transform:scaleX(1.1428);transform-origin:0 0">Nonstop</div>
<div class="t" style="left:866.80px;top:953.90px;font-size:15px;line-height:15px;color:#202124">2</div>
<div class="t" style="left:786.10px;top:946.56px;font-size:19.3px;line-height:19.3px;color:#202124;transform:scaleX(0.8860);transform-origin:0 0">311 kg CO</div>
<svg style="left:896.45px;top:975.5px" width="12" height="12" viewBox="0 0 12 12"><circle cx="6" cy="6" r="4.8" fill="none" stroke="#5f6368" stroke-width="1"/><rect x="5.5" y="5.3" width="1" height="3.1" fill="#5f6368"/><rect x="5.5" y="3.5" width="1" height="1" fill="#5f6368"/></svg>
<div class="t" style="left:786.10px;top:974.05px;font-size:14px;line-height:14px;color:#70757a;transform:scaleX(1.0134);transform-origin:0 0">+10% emissions</div>
<div class="t" style="left:1074.00px;top:957.01px;font-size:19px;line-height:19px;color:#2b7e38;transform:scaleX(0.9017);transform-origin:0 0;-webkit-text-stroke:0.6px #2b7e38">$159</div>
<div class="t" style="left:129.00px;top:1034.74px;font-size:18.5px;line-height:18.5px;color:#202124;transform:scaleX(1.0188);transform-origin:0 0;-webkit-text-stroke:0.35px #202124">5:05 PM – 9:05 PM</div>
<div class="t" style="left:129.00px;top:1060.65px;font-size:14px;line-height:14px;color:#70757a;transform:scaleX(1.0352);transform-origin:0 0">American</div>
<div class="t" style="left:473.20px;top:1034.91px;font-size:17px;line-height:17px;color:#202124;transform:scaleX(1.0597);transform-origin:0 0">6 hr</div>
<div class="t" style="left:472.80px;top:1060.85px;font-size:14px;line-height:14px;color:#70757a;letter-spacing:0.089px">LAX–HNL</div>
<div class="t" style="left:622.86px;top:1034.91px;font-size:17px;line-height:17px;color:#202124;transform:scaleX(1.1428);transform-origin:0 0">Nonstop</div>
<div class="t" style="left:871.80px;top:1040.50px;font-size:15px;line-height:15px;color:#202124">2</div>
<div class="t" style="left:785.70px;top:1033.16px;font-size:19.3px;line-height:19.3px;color:#202124;transform:scaleX(0.9309);transform-origin:0 0">227 kg CO</div>
<div class="t" style="left:786.30px;top:1060.75px;font-size:14px;line-height:14px;color:#137333;transform:scaleX(1.0150);transform-origin:0 0;-webkit-text-stroke:0.15px #137333;z-index:3">-19% emissions</div>
<div class="t" style="left:1074.00px;top:1043.91px;font-size:19px;line-height:19px;color:#2b7e38;transform:scaleX(0.9017);transform-origin:0 0;-webkit-text-stroke:0.6px #2b7e38">$159</div>
<div class="t" style="left:127.95px;top:1121.64px;font-size:18.5px;line-height:18.5px;color:#202124;transform:scaleX(1.0455);transform-origin:0 0;-webkit-text-stroke:0.35px #202124">10:00 AM – 2:00 PM</div>
<div class="t" style="left:127.95px;top:1147.55px;font-size:14px;line-height:14px;color:#70757a;transform:scaleX(1.0538);transform-origin:0 0">Hawaiian</div>
<div class="t" style="left:473.20px;top:1121.81px;font-size:17px;line-height:17px;color:#202124;transform:scaleX(1.0597);transform-origin:0 0">6 hr</div>
<div class="t" style="left:472.80px;top:1147.75px;font-size:14px;line-height:14px;color:#70757a;letter-spacing:0.089px">LAX–HNL</div>
<div class="t" style="left:622.86px;top:1121.81px;font-size:17px;line-height:17px;color:#202124;transform:scaleX(1.1428);transform-origin:0 0">Nonstop</div>
<div class="t" style="left:878.60px;top:1127.70px;font-size:15px;line-height:15px;color:#202124">2</div>
<div class="t" style="left:786.10px;top:1120.36px;font-size:19.3px;line-height:19.3px;color:#202124">300 kg CO</div>
<svg style="left:888.15px;top:1149.3px" width="12" height="12" viewBox="0 0 12 12"><circle cx="6" cy="6" r="4.8" fill="none" stroke="#5f6368" stroke-width="1"/><rect x="5.5" y="5.3" width="1" height="3.1" fill="#5f6368"/><rect x="5.5" y="3.5" width="1" height="1" fill="#5f6368"/></svg>
<div class="t" style="left:786.10px;top:1147.85px;font-size:14px;line-height:14px;color:#70757a;transform:scaleX(1.0091);transform-origin:0 0">+6% emissions</div>
<div class="t" style="left:1067.90px;top:1130.81px;font-size:19px;line-height:19px;color:#202124;transform:scaleX(1.0479);transform-origin:0 0;-webkit-text-stroke:0.6px #202124">$200</div>
<div class="t" style="left:129.00px;top:1208.54px;font-size:18.5px;line-height:18.5px;color:#202124;transform:scaleX(0.9788);transform-origin:0 0;-webkit-text-stroke:0.35px #202124">6:30 PM – 10:31 PM</div>
<div class="t" style="left:129.00px;top:1234.45px;font-size:14px;line-height:14px;color:#70757a;transform:scaleX(1.0352);transform-origin:0 0">American</div>
<div class="t" style="left:473.20px;top:1208.71px;font-size:17px;line-height:17px;color:#202124;transform:scaleX(1.0448);transform-origin:0 0">6 hr 1 min</div>
<div class="t" style="left:472.80px;top:1234.65px;font-size:14px;line-height:14px;color:#70757a;letter-spacing:0.089px">LAX–HNL</div>
<div class="t" style="left:622.86px;top:1208.71px;font-size:17px;line-height:17px;color:#202124;transform:scaleX(1.1428);transform-origin:0 0">Nonstop</div>
<div class="t" style="left:871.80px;top:1214.30px;font-size:15px;line-height:15px;color:#202124">2</div>
<div class="t" style="left:785.70px;top:1206.96px;font-size:19.3px;line-height:19.3px;color:#202124;transform:scaleX(0.9309);transform-origin:0 0">227 kg CO</div>
<div class="t" style="left:786.30px;top:1234.55px;font-size:14px;line-height:14px;color:#137333;transform:scaleX(1.0150);transform-origin:0 0;-webkit-text-stroke:0.15px #137333;z-index:3">-19% emissions</div>
<div class="t" style="left:1074.00px;top:1217.71px;font-size:19px;line-height:19px;color:#2b7e38;transform:scaleX(0.9017);transform-origin:0 0;-webkit-text-stroke:0.6px #2b7e38">$159</div>
<div class="t" style="left:129.00px;top:1295.44px;font-size:18.5px;line-height:18.5px;color:#202124;transform:scaleX(1.0328);transform-origin:0 0;-webkit-text-stroke:0.35px #202124">5:00 PM – 9:05 PM</div>
<div class="t" style="left:127.95px;top:1321.35px;font-size:14px;line-height:14px;color:#70757a;transform:scaleX(1.0538);transform-origin:0 0">Hawaiian</div>
<div class="t" style="left:473.20px;top:1295.61px;font-size:17px;line-height:17px;color:#202124;transform:scaleX(1.0874);transform-origin:0 0">6 hr 5 min</div>
<div class="t" style="left:472.80px;top:1321.55px;font-size:14px;line-height:14px;color:#70757a;letter-spacing:0.089px">LAX–HNL</div>
<div class="t" style="left:622.86px;top:1295.61px;font-size:17px;line-height:17px;color:#202124;transform:scaleX(1.1428);transform-origin:0 0">Nonstop</div>
<div class="t" style="left:878.60px;top:1301.50px;font-size:15px;line-height:15px;color:#202124">2</div>
<div class="t" style="left:786.10px;top:1294.16px;font-size:19.3px;line-height:19.3px;color:#202124">300 kg CO</div>
<svg style="left:888.15px;top:1323.1px" width="12" height="12" viewBox="0 0 12 12"><circle cx="6" cy="6" r="4.8" fill="none" stroke="#5f6368" stroke-width="1"/><rect x="5.5" y="5.3" width="1" height="3.1" fill="#5f6368"/><rect x="5.5" y="3.5" width="1" height="1" fill="#5f6368"/></svg>
<div class="t" style="left:786.10px;top:1321.65px;font-size:14px;line-height:14px;color:#70757a;transform:scaleX(1.0091);transform-origin:0 0">+6% emissions</div>
<div class="t" style="left:1069.90px;top:1304.61px;font-size:19px;line-height:19px;color:#202124;-webkit-text-stroke:0.6px #202124">$220</div>
</div></body></html>
